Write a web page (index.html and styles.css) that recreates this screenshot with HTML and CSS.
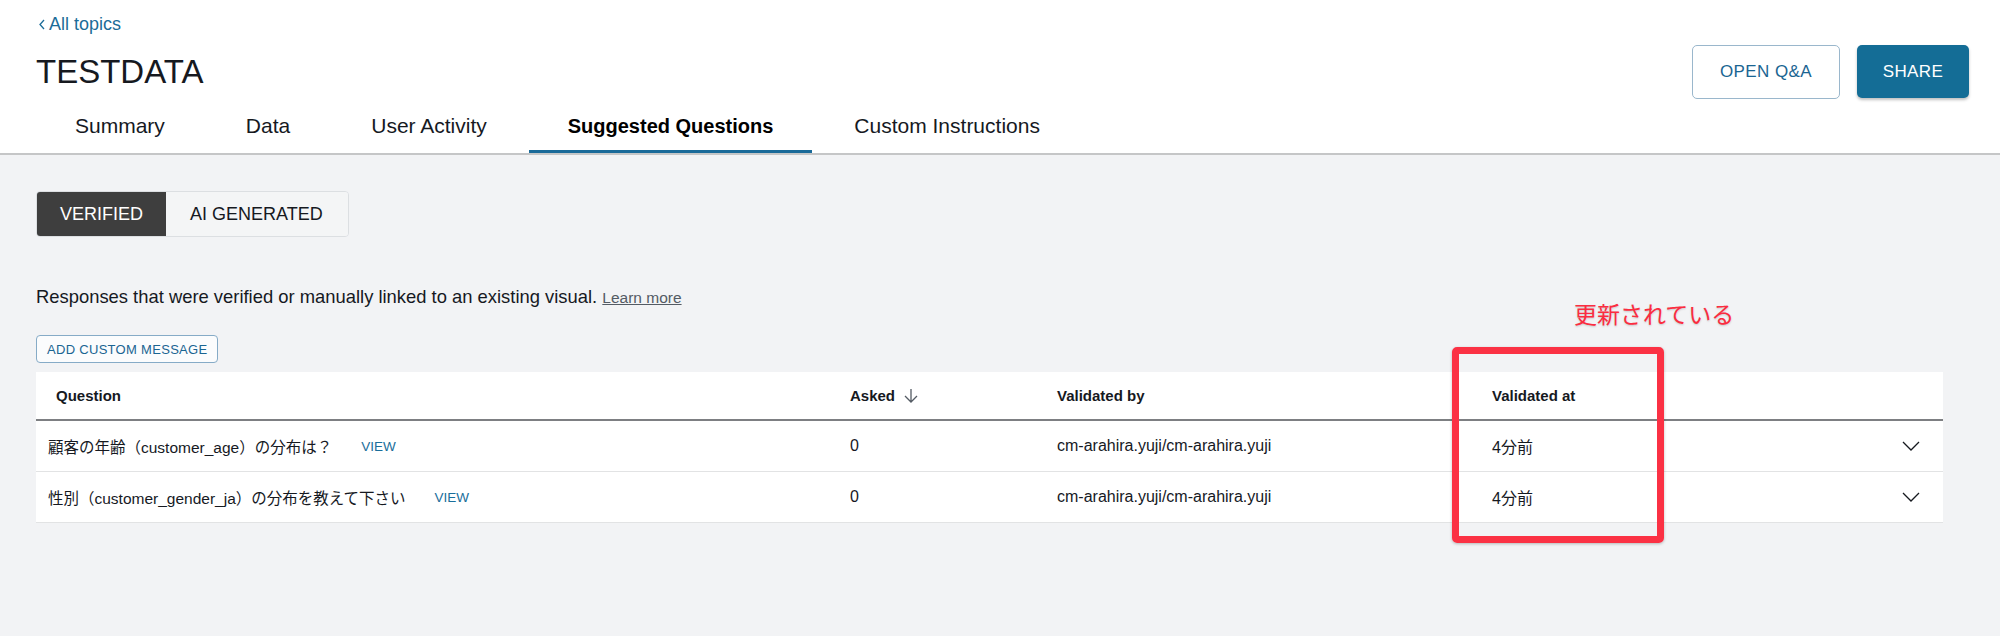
FILE: index.html
```html
<!DOCTYPE html>
<html lang="ja">
<head>
    <meta charset="UTF-8">
    <meta name="viewport" content="width=device-width, initial-scale=1.0">
    <title>TESTDATA - Suggested Questions</title>
    <link rel="stylesheet" href="styles.css">
</head>
<body>
    <header class="topic-header">
        <div class="topic-top">
            <a class="back-link" href="#">
                <svg class="back-icon" width="8" height="11" viewBox="0 0 8 11"><path d="M6 1 L2 5.5 L6 10" fill="none" stroke="#1b6c98" stroke-width="1.3"/></svg>
                All topics
            </a>
            <div class="title-row">
                <h1>TESTDATA</h1>
                <div class="actions">
                    <button class="btn btn-outline">OPEN Q&amp;A</button>
                    <button class="btn btn-primary">SHARE</button>
                </div>
            </div>
        </div>
        <nav class="tabs">
            <a class="tab" href="#">Summary</a>
            <a class="tab" href="#">Data</a>
            <a class="tab" href="#">User Activity</a>
            <a class="tab active" href="#">Suggested Questions</a>
            <a class="tab" href="#">Custom Instructions</a>
        </nav>
    </header>

    <main class="content">
        <div class="segmented">
            <button class="seg-btn selected">VERIFIED</button>
            <button class="seg-btn">AI GENERATED</button>
        </div>

        <p class="desc">Responses that were verified or manually linked to an existing visual. <a href="#" class="learn-more">Learn more</a></p>

        <button class="btn-small">ADD CUSTOM MESSAGE</button>

        <div class="table">
            <div class="row head">
                <div class="cell first">Question</div>
                <div class="cell">Asked
                    <svg class="sort-icon" width="16" height="15" viewBox="0 0 16 15"><path d="M8 1 V14 M2 8 L8 14 L14 8" fill="none" stroke="#545b64" stroke-width="1.3"/></svg>
                </div>
                <div class="cell">Validated by</div>
                <div class="cell">Validated at</div>
                <div class="cell"></div>
            </div>
            <div class="row">
                <div class="cell first question">顧客の年齢（customer_age）の分布は？<a href="#" class="view">VIEW</a></div>
                <div class="cell">0</div>
                <div class="cell">cm-arahira.yuji/cm-arahira.yuji</div>
                <div class="cell">4分前</div>
                <div class="cell chev">
                    <svg width="18" height="10" viewBox="0 0 18 10"><path d="M1 1 L9 9 L17 1" fill="none" stroke="#16191f" stroke-width="1.3"/></svg>
                </div>
            </div>
            <div class="row">
                <div class="cell first question">性別（customer_gender_ja）の分布を教えて下さい<a href="#" class="view">VIEW</a></div>
                <div class="cell">0</div>
                <div class="cell">cm-arahira.yuji/cm-arahira.yuji</div>
                <div class="cell">4分前</div>
                <div class="cell chev">
                    <svg width="18" height="10" viewBox="0 0 18 10"><path d="M1 1 L9 9 L17 1" fill="none" stroke="#16191f" stroke-width="1.3"/></svg>
                </div>
            </div>
        </div>
    </main>

    <div class="note-text">更新されている</div>
    <div class="note-box"></div>
</body>
</html>
```

FILE: styles.css
```css
body {
    margin: 0;
    position: relative;
    min-height: 636px;
    background-color: #f2f3f5;
    font-family: 'Liberation Sans', 'Noto Sans CJK JP', sans-serif;
    color: #16191f;
}
a {
    text-decoration: none;
}
button {
    font-family: inherit;
    cursor: pointer;
}
.topic-header {
    background-color: #fff;
    border-bottom: 2px solid #c5c6c7;
}
.topic-top {
    padding: 10px 31px 0 36px;
}
.back-link {
    display: inline-flex;
    align-items: center;
    gap: 3px;
    height: 28px;
    font-size: 18px;
    color: #1b6c98;
}
.back-icon {
    margin-left: 2px;
}
.title-row {
    display: flex;
    align-items: center;
    justify-content: space-between;
    height: 54px;
    margin-top: 7px;
}
h1 {
    margin: 0;
    font-size: 33px;
    font-weight: normal;
    line-height: 54px;
}
.actions {
    display: flex;
    gap: 17px;
}
.btn {
    height: 54px;
    font-size: 17px;
    border-radius: 5px;
    letter-spacing: 0.4px;
}
.btn-outline {
    width: 148px;
    background-color: #fff;
    border: 1px solid #9ab7cc;
    color: #1a6592;
}
.btn-primary {
    width: 112px;
    height: 53px;
    background-color: #146d96;
    border: none;
    color: #fff;
    box-shadow: 0 2px 3px rgba(0, 0, 0, 0.25);
}
.tabs {
    display: flex;
    gap: 3px;
    padding-left: 36px;
}
.tab {
    padding: 0 39px;
    height: 51px;
    line-height: 54px;
    font-size: 21px;
    color: #16191f;
    border-bottom: 3px solid transparent;
}
.tab.active {
    font-size: 20px;
    font-weight: bold;
    color: #000;
    border-bottom-color: #1a6a99;
}
.content {
    padding: 36px 57px 0 36px;
}
.segmented {
    display: flex;
    width: max-content;
    border: 1px solid #dcdfe2;
    border-radius: 4px;
    overflow: hidden;
}
.seg-btn {
    height: 44px;
    padding: 0 23px;
    font-size: 18px;
    border: none;
    background-color: #f4f5f6;
    color: #16191f;
}
.seg-btn + .seg-btn {
    padding: 0 25px 0 24px;
}
.seg-btn.selected {
    background-color: #3e3e3e;
    color: #fff;
}
.desc {
    margin: 48px 0 0;
    font-size: 18.4px;
    line-height: 24px;
}
.learn-more {
    font-size: 15.5px;
    color: #545b64;
    text-decoration: underline;
}
.btn-small {
    display: block;
    margin-top: 25px;
    height: 28px;
    padding: 0 10px;
    font-size: 13px;
    letter-spacing: 0.3px;
    color: #1a6592;
    background-color: #fbfcfd;
    border: 1px solid #86abc7;
    border-radius: 4px;
}
.table {
    margin-top: 9px;
    background-color: #fff;
}
.row {
    display: grid;
    grid-template-columns: 814px 207px 435px 1fr 41px;
    height: 50px;
    border-bottom: 1px solid #e2e3e4;
    font-size: 16px;
}
.row.head {
    height: 47px;
    border-bottom: 2px solid #7d7f82;
    font-size: 15px;
    font-weight: bold;
}
.cell {
    display: flex;
    align-items: center;
}
.cell.first {
    padding-left: 12px;
}
.cell.question {
    font-size: 15.5px;
}
.row.head .cell.first {
    padding-left: 20px;
}
.sort-icon {
    margin-left: 8px;
}
.view {
    margin-left: 29px;
    font-size: 13.5px;
    color: #1a6e9b;
}
.note-text {
    position: absolute;
    left: 1574px;
    top: 298px;
    font-family: 'Noto Sans CJK JP', sans-serif;
    font-size: 23px;
    line-height: 30px;
    color: #fb2c40;
    text-shadow: 0 1px 2px rgba(0, 0, 0, 0.18);
}
.note-box {
    position: absolute;
    left: 1452px;
    top: 347px;
    width: 212px;
    height: 196px;
    box-sizing: border-box;
    border: 7px solid #fb3144;
    border-radius: 5px;
    box-shadow: 0 1px 3px rgba(0, 0, 0, 0.25);
}
```
